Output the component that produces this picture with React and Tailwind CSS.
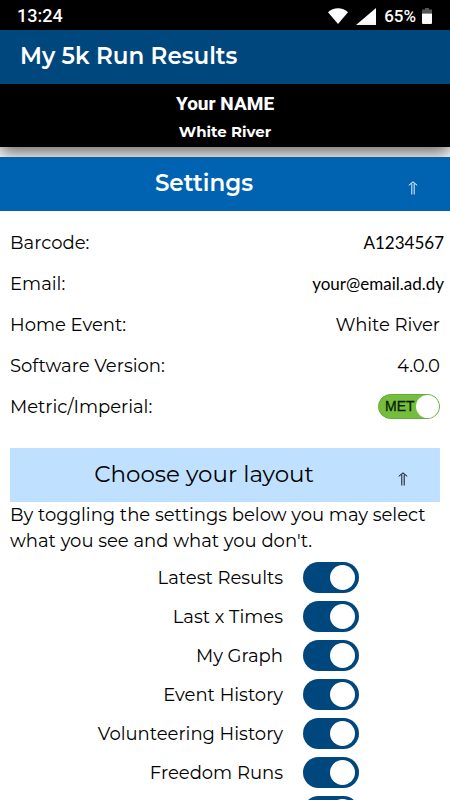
import { useState } from "react";

const layoutOptions = [
  "Latest Results",
  "Last x Times",
  "My Graph",
  "Event History",
  "Volunteering History",
  "Freedom Runs",
];

function UpArrow() {
  return (
    <svg
      viewBox="0 0 10 14"
      className="mt-2 h-3.5 w-2.5 shrink-0"
      fill="none"
      stroke="currentColor"
      strokeWidth="1"
      aria-hidden="true"
    >
      <path d="M0.8 4.4L5 0.8L9.2 4.4" />
      <path d="M3.8 2.4V13.5M6.2 2.4V13.5" strokeWidth="0.9" />
    </svg>
  );
}

function StatusBar() {
  return (
    <div className="flex h-[30px] shrink-0 items-center justify-between bg-black pt-0.5 pl-[17px] pr-[18px] font-['Roboto',sans-serif] text-lg font-medium text-white">
      <span>13:24</span>
      <div className="flex items-center">
        <svg viewBox="0 0 20 16" className="mr-2 h-4 w-5" fill="white" aria-hidden="true">
          <path d="M0 4.2C2.8 1.6 6.2 0.3 10 0.3S17.2 1.6 20 4.2L10 16Z" />
        </svg>
        <svg viewBox="0 0 20 17" className="mr-2 h-[17px] w-5" fill="white" aria-hidden="true">
          <path d="M20 0V17H0Z" />
        </svg>
        <span className="mr-1.5 text-[17px]">65%</span>
        <svg viewBox="0 0 10 16" className="h-4 w-2.5" aria-hidden="true">
          <path d="M3 0H7V1.5H10V5.5H0V1.5H3Z" fill="#555" />
          <path d="M0 5.5H10V15Q10 16 9 16H1Q0 16 0 15Z" fill="white" />
        </svg>
      </div>
    </div>
  );
}

function Row({ label, children }) {
  return (
    <div className="flex h-[41px] items-center justify-between">
      <dt>{label}</dt>
      <dd>{children}</dd>
    </div>
  );
}

function Switch({ label, ...props }) {
  return (
    <label className="flex h-[39px] items-center justify-end pr-[81px]">
      <span className="mr-5">{label}</span>
      <input
        type="checkbox"
        defaultChecked
        className="flex h-[31px] w-14 appearance-none items-center rounded-full bg-gray-400 px-1 before:size-[25px] before:rounded-full before:bg-white checked:justify-end checked:bg-[#00477e]"
        {...props}
      />
    </label>
  );
}

export default function App() {
  const [metric, setMetric] = useState(true);
  const [settingsOpen, setSettingsOpen] = useState(true);
  const [layoutOpen, setLayoutOpen] = useState(true);

  return (
    <div className="flex h-screen flex-col bg-white font-['Montserrat','Inter',sans-serif] text-lg text-black">
      <StatusBar />

      <header className="relative z-10 shrink-0 bg-black text-center text-white shadow-[0_6px_16px_rgba(0,0,0,0.6)]">
        <h1 className="flex h-[54px] items-center bg-[#00477e] px-5 text-[23px] font-semibold">
          My 5k Run Results
        </h1>
        <div className="flex h-[63px] flex-col items-center justify-center pt-1">
          <p className="font-['Roboto',sans-serif] text-[19px] font-extrabold leading-7">
            Your NAME
          </p>
          <p className="text-[15px] font-bold leading-7">White River</p>
        </div>
      </header>

      <main className="min-h-0 flex-1 overflow-y-auto pt-[10px] [scrollbar-width:none]">
        <h2 className="relative z-20">
          <button
            onClick={() => setSettingsOpen(!settingsOpen)}
            className="flex h-[54px] w-full items-center bg-[#0063b1] pr-8 text-[23px] font-semibold text-white"
          >
            <span className="flex-1 text-center">Settings</span>
            <UpArrow />
          </button>
        </h2>

        {settingsOpen && (
          <div className="px-2.5 pt-[11px]">
            <dl>
              <Row label="Barcode:">
                <span className="-mr-1 font-['Lato',sans-serif] text-[17px]">A1234567</span>
              </Row>
              <Row label="Email:">
                <span className="-mr-1 font-['Lato',sans-serif] text-[17px]">your@email.ad.dy</span>
              </Row>
              <Row label="Home Event:">White River</Row>
              <Row label="Software Version:">4.0.0</Row>
              <Row label={<label htmlFor="units">Metric/Imperial:</label>}>
                <span className="relative flex">
                  <input
                    id="units"
                    type="checkbox"
                    checked={metric}
                    onChange={() => setMetric(!metric)}
                    className="flex h-[25px] w-[62px] appearance-none items-center justify-end rounded-full border border-[#69a83a] bg-[#74bd3e] before:size-[23px] before:rounded-full before:bg-white"
                  />
                  <span className="pointer-events-none absolute left-[7px] top-0 font-['Liberation_Sans',sans-serif] text-sm leading-[25px] text-[#0b1c06] [-webkit-text-stroke:0.3px_#0b1c06]">
                    {metric ? "MET" : "IMP"}
                  </span>
                </span>
              </Row>
            </dl>

            <h3 className="mt-[21px]">
              <button
                onClick={() => setLayoutOpen(!layoutOpen)}
                className="flex h-[54px] w-full items-center bg-[#bfe1ff] pr-8 text-[23px]"
              >
                <span className="flex-1 text-center">Choose your layout</span>
                <UpArrow />
              </button>
            </h3>

            {layoutOpen && (
              <>
                <p className="leading-[26px]">
                  By toggling the settings below you may select what you see and
                  what you don't.
                </p>
                <div className="pt-1">
                  {layoutOptions.map((option) => (
                    <Switch key={option} label={option} />
                  ))}
                  <Switch aria-label="More" />
                </div>
              </>
            )}
          </div>
        )}
      </main>
    </div>
  );
}
